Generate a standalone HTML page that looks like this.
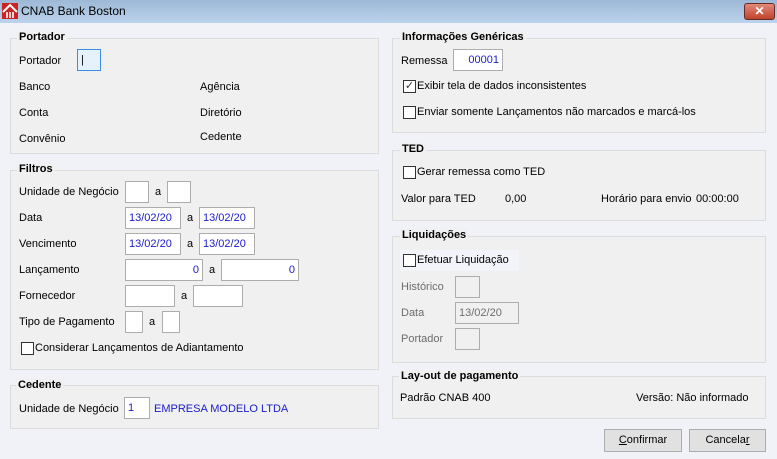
<!DOCTYPE html>
<html><head><meta charset="utf-8"><style>
*{margin:0;padding:0;box-sizing:border-box}
body{width:777px;height:459px;overflow:hidden;background:#f1f2f7;font-family:"Liberation Sans",sans-serif;font-size:11px;color:#000;position:relative}
.a{position:absolute;white-space:nowrap;line-height:13px;padding-top:1px}
.title{position:absolute;left:0;top:0;width:777px;height:23px;background:linear-gradient(#9db8d6,#bcd3ec)}
.g{position:absolute;border:1px solid #dcdcdc;background:#f0f0f0}
.gt{position:absolute;font-weight:bold;background:#f0f0f0;padding:0 2px;line-height:13px;font-size:11px}
.in{position:absolute;background:#fff;border:1px solid #adadad;height:22px;color:#1a1acc;line-height:21px;padding:0 3px}
.r{text-align:right}
.cb{position:absolute;width:13px;height:13px;border:1px solid #333;background:#fff}
.dis{color:#6d6d6d}
.dis.in{background:#f0f0f0;color:#6d6d6d}
.btn{position:absolute;height:23px;border:1px solid #adadad;background:#e1e1e1;text-align:center;line-height:21px}
</style></head><body>
<div class="title"></div>
<svg class="a" style="left:2px;top:3px;padding:0" width="16" height="16" viewBox="0 0 16 16"><rect width="16" height="16" fill="#c22"/><path d="M1 9 L8 2 L15 9" stroke="#fff" stroke-width="2" fill="none"/><path d="M5 15V9M8 15V9M11 15V9" stroke="#fff" stroke-width="1.6"/></svg>
<div class="a" style="left:21px;top:4px;font-size:12px">CNAB Bank Boston</div>
<div class="a" style="left:744px;top:3px;width:31px;height:17px;border:1px solid #6b2a2a;border-radius:3px;background:linear-gradient(#e08a78,#c0432c);color:#fff;text-align:center;font-weight:bold;line-height:15px;font-size:12px;padding:0">✕</div>

<!-- Portador -->
<div class="g" style="left:10px;top:38px;width:369px;height:116px"></div>
<div class="gt" style="left:17px;top:31px">Portador</div>
<div class="a" style="left:19px;top:54px">Portador</div>
<div class="in" style="left:77px;top:49px;width:24px;border-color:#3d8ee0;background:#e5f1fb;color:#000">|</div>
<div class="a" style="left:19px;top:80px">Banco</div>
<div class="a" style="left:19px;top:106px">Conta</div>
<div class="a" style="left:19px;top:132px">Convênio</div>
<div class="a" style="left:200px;top:80px">Agência</div>
<div class="a" style="left:200px;top:106px">Diretório</div>
<div class="a" style="left:200px;top:130px">Cedente</div>

<!-- Filtros -->
<div class="g" style="left:10px;top:170px;width:369px;height:200px"></div>
<div class="gt" style="left:17px;top:163px">Filtros</div>
<div class="a" style="left:19px;top:185px">Unidade de Negócio</div>
<div class="in" style="left:125px;top:181px;width:24px"></div><div class="a" style="left:155px;top:185px">a</div><div class="in" style="left:167px;top:181px;width:24px"></div>
<div class="a" style="left:19px;top:211px">Data</div>
<div class="in" style="left:125px;top:207px;width:56px">13/02/20</div><div class="a" style="left:187px;top:211px">a</div><div class="in" style="left:199px;top:207px;width:56px">13/02/20</div>
<div class="a" style="left:19px;top:237px">Vencimento</div>
<div class="in" style="left:125px;top:233px;width:56px">13/02/20</div><div class="a" style="left:187px;top:237px">a</div><div class="in" style="left:199px;top:233px;width:56px">13/02/20</div>
<div class="a" style="left:19px;top:263px">Lançamento</div>
<div class="in r" style="left:125px;top:259px;width:78px">0</div><div class="a" style="left:209px;top:263px">a</div><div class="in r" style="left:221px;top:259px;width:78px">0</div>
<div class="a" style="left:19px;top:289px">Fornecedor</div>
<div class="in" style="left:125px;top:285px;width:50px"></div><div class="a" style="left:181px;top:289px">a</div><div class="in" style="left:193px;top:285px;width:50px"></div>
<div class="a" style="left:19px;top:315px">Tipo de Pagamento</div>
<div class="in" style="left:125px;top:311px;width:18px"></div><div class="a" style="left:149px;top:315px">a</div><div class="in" style="left:162px;top:311px;width:18px"></div>
<div class="cb" style="left:21px;top:342px"></div><div class="a" style="left:35px;top:341px">Considerar Lançamentos de Adiantamento</div>

<!-- Cedente -->
<div class="g" style="left:10px;top:385px;width:369px;height:44px"></div>
<div class="gt" style="left:16px;top:379px">Cedente</div>
<div class="a" style="left:19px;top:402px">Unidade de Negócio</div>
<div class="in" style="left:124px;top:397px;width:26px">1</div>
<div class="a" style="left:154px;top:402px;color:#1a1acc">EMPRESA MODELO LTDA</div>

<!-- Informações -->
<div class="g" style="left:392px;top:38px;width:374px;height:95px"></div>
<div class="gt" style="left:400px;top:31px">Informações Genéricas</div>
<div class="a" style="left:401px;top:54px">Remessa</div>
<div class="in r" style="left:453px;top:49px;width:50px">00001</div>
<div class="cb" style="left:403px;top:80px;color:#333;font-size:11px;line-height:11px;text-align:center">✓</div><div class="a" style="left:417px;top:79px">Exibir tela de dados inconsistentes</div>
<div class="cb" style="left:403px;top:106px"></div><div class="a" style="left:417px;top:105px">Enviar somente Lançamentos não marcados e marcá-los</div>

<!-- TED -->
<div class="g" style="left:392px;top:150px;width:374px;height:71px"></div>
<div class="gt" style="left:400px;top:143px">TED</div>
<div class="cb" style="left:403px;top:166px"></div><div class="a" style="left:417px;top:165px">Gerar remessa como TED</div>
<div class="a" style="left:401px;top:192px">Valor para TED</div>
<div class="a" style="left:505px;top:192px">0,00</div>
<div class="a" style="left:601px;top:192px">Horário para envio</div>
<div class="a" style="left:696px;top:192px">00:00:00</div>

<!-- Liquidações -->
<div class="g" style="left:392px;top:236px;width:374px;height:127px"></div>
<div class="gt" style="left:400px;top:229px">Liquidações</div>
<div class="a" style="left:400px;top:250px;width:119px;height:21px;background:#f3f4fa"></div>
<div class="cb" style="left:403px;top:254px"></div><div class="a" style="left:417px;top:253px">Efetuar Liquidação</div>
<div class="a dis" style="left:401px;top:280px">Histórico</div>
<div class="in dis" style="left:455px;top:276px;width:25px"></div>
<div class="a dis" style="left:401px;top:306px">Data</div>
<div class="in dis" style="left:455px;top:302px;width:64px">13/02/20</div>
<div class="a dis" style="left:401px;top:332px">Portador</div>
<div class="in dis" style="left:455px;top:328px;width:25px"></div>

<!-- Lay-out -->
<div class="g" style="left:392px;top:376px;width:374px;height:43px"></div>
<div class="gt" style="left:399px;top:370px">Lay-out de pagamento</div>
<div class="a" style="left:400px;top:391px">Padrão CNAB 400</div>
<div class="a" style="left:636px;top:391px">Versão: Não informado</div>

<div class="btn" style="left:604px;top:429px;width:78px"><u>C</u>onfirmar</div>
<div class="btn" style="left:689px;top:429px;width:77px">Cancela<u>r</u></div>
</body></html>
